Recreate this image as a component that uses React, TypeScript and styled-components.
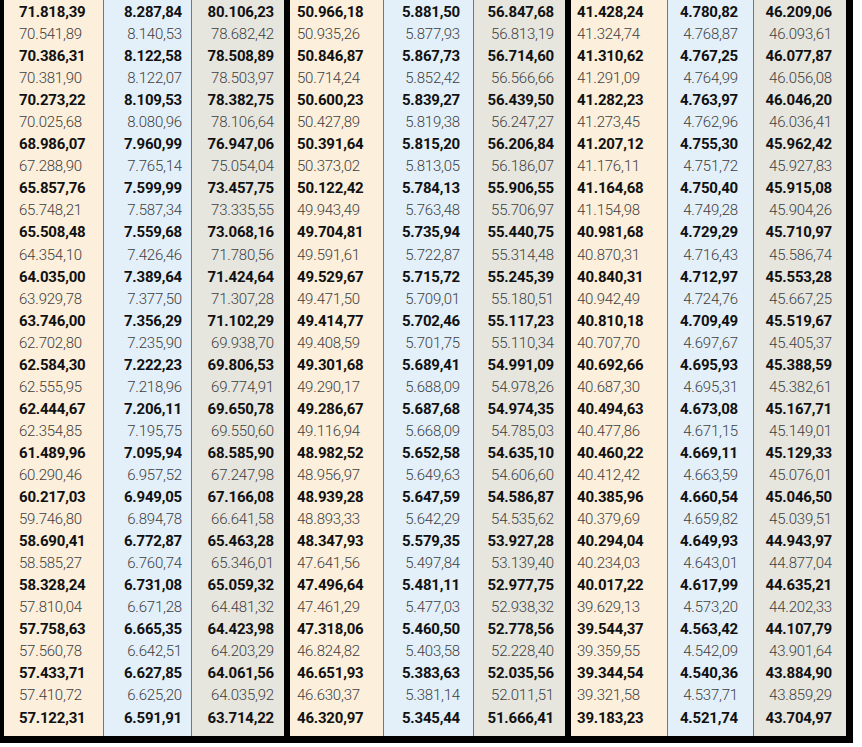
import React from "react";
import styled, { createGlobalStyle } from "styled-components";

const GlobalStyle = createGlobalStyle`
  html, body {
    margin: 0;
    padding: 0;
    background: #ffffff;
  }
`;

type Align = "left" | "right";

interface IColumn {
  width: number;
  bg: string;
  align: Align;
  pad: number;
  sep: boolean;
}

// 한 그룹에 세 컬럼 (연한 주황 / 파랑 / 회색)
const PEACH = "#fcefdb";
const BLUE = "#e3f0fa";
const GREY = "#e6e6df";

const groups: IColumn[][] = [
  [
    { width: 99, bg: PEACH, align: "left", pad: 15, sep: false },
    { width: 88, bg: BLUE, align: "right", pad: 9, sep: true },
    { width: 93, bg: GREY, align: "right", pad: 10, sep: true },
  ],
  [
    { width: 93, bg: PEACH, align: "left", pad: 7, sep: false },
    { width: 90, bg: BLUE, align: "right", pad: 13, sep: true },
    { width: 92, bg: GREY, align: "right", pad: 11, sep: true },
  ],
  [
    { width: 96, bg: PEACH, align: "left", pad: 6, sep: false },
    { width: 86, bg: BLUE, align: "right", pad: 15, sep: true },
    { width: 93, bg: GREY, align: "right", pad: 14, sep: true },
  ],
];

const rows: string[][] = [
  ["71.818,39", "8.287,84", "80.106,23", "50.966,18", "5.881,50", "56.847,68", "41.428,24", "4.780,82", "46.209,06"],
  ["70.541,89", "8.140,53", "78.682,42", "50.935,26", "5.877,93", "56.813,19", "41.324,74", "4.768,87", "46.093,61"],
  ["70.386,31", "8.122,58", "78.508,89", "50.846,87", "5.867,73", "56.714,60", "41.310,62", "4.767,25", "46.077,87"],
  ["70.381,90", "8.122,07", "78.503,97", "50.714,24", "5.852,42", "56.566,66", "41.291,09", "4.764,99", "46.056,08"],
  ["70.273,22", "8.109,53", "78.382,75", "50.600,23", "5.839,27", "56.439,50", "41.282,23", "4.763,97", "46.046,20"],
  ["70.025,68", "8.080,96", "78.106,64", "50.427,89", "5.819,38", "56.247,27", "41.273,45", "4.762,96", "46.036,41"],
  ["68.986,07", "7.960,99", "76.947,06", "50.391,64", "5.815,20", "56.206,84", "41.207,12", "4.755,30", "45.962,42"],
  ["67.288,90", "7.765,14", "75.054,04", "50.373,02", "5.813,05", "56.186,07", "41.176,11", "4.751,72", "45.927,83"],
  ["65.857,76", "7.599,99", "73.457,75", "50.122,42", "5.784,13", "55.906,55", "41.164,68", "4.750,40", "45.915,08"],
  ["65.748,21", "7.587,34", "73.335,55", "49.943,49", "5.763,48", "55.706,97", "41.154,98", "4.749,28", "45.904,26"],
  ["65.508,48", "7.559,68", "73.068,16", "49.704,81", "5.735,94", "55.440,75", "40.981,68", "4.729,29", "45.710,97"],
  ["64.354,10", "7.426,46", "71.780,56", "49.591,61", "5.722,87", "55.314,48", "40.870,31", "4.716,43", "45.586,74"],
  ["64.035,00", "7.389,64", "71.424,64", "49.529,67", "5.715,72", "55.245,39", "40.840,31", "4.712,97", "45.553,28"],
  ["63.929,78", "7.377,50", "71.307,28", "49.471,50", "5.709,01", "55.180,51", "40.942,49", "4.724,76", "45.667,25"],
  ["63.746,00", "7.356,29", "71.102,29", "49.414,77", "5.702,46", "55.117,23", "40.810,18", "4.709,49", "45.519,67"],
  ["62.702,80", "7.235,90", "69.938,70", "49.408,59", "5.701,75", "55.110,34", "40.707,70", "4.697,67", "45.405,37"],
  ["62.584,30", "7.222,23", "69.806,53", "49.301,68", "5.689,41", "54.991,09", "40.692,66", "4.695,93", "45.388,59"],
  ["62.555,95", "7.218,96", "69.774,91", "49.290,17", "5.688,09", "54.978,26", "40.687,30", "4.695,31", "45.382,61"],
  ["62.444,67", "7.206,11", "69.650,78", "49.286,67", "5.687,68", "54.974,35", "40.494,63", "4.673,08", "45.167,71"],
  ["62.354,85", "7.195,75", "69.550,60", "49.116,94", "5.668,09", "54.785,03", "40.477,86", "4.671,15", "45.149,01"],
  ["61.489,96", "7.095,94", "68.585,90", "48.982,52", "5.652,58", "54.635,10", "40.460,22", "4.669,11", "45.129,33"],
  ["60.290,46", "6.957,52", "67.247,98", "48.956,97", "5.649,63", "54.606,60", "40.412,42", "4.663,59", "45.076,01"],
  ["60.217,03", "6.949,05", "67.166,08", "48.939,28", "5.647,59", "54.586,87", "40.385,96", "4.660,54", "45.046,50"],
  ["59.746,80", "6.894,78", "66.641,58", "48.893,33", "5.642,29", "54.535,62", "40.379,69", "4.659,82", "45.039,51"],
  ["58.690,41", "6.772,87", "65.463,28", "48.347,93", "5.579,35", "53.927,28", "40.294,04", "4.649,93", "44.943,97"],
  ["58.585,27", "6.760,74", "65.346,01", "47.641,56", "5.497,84", "53.139,40", "40.234,03", "4.643,01", "44.877,04"],
  ["58.328,24", "6.731,08", "65.059,32", "47.496,64", "5.481,11", "52.977,75", "40.017,22", "4.617,99", "44.635,21"],
  ["57.810,04", "6.671,28", "64.481,32", "47.461,29", "5.477,03", "52.938,32", "39.629,13", "4.573,20", "44.202,33"],
  ["57.758,63", "6.665,35", "64.423,98", "47.318,06", "5.460,50", "52.778,56", "39.544,37", "4.563,42", "44.107,79"],
  ["57.560,78", "6.642,51", "64.203,29", "46.824,82", "5.403,58", "52.228,40", "39.359,55", "4.542,09", "43.901,64"],
  ["57.433,71", "6.627,85", "64.061,56", "46.651,93", "5.383,63", "52.035,56", "39.344,54", "4.540,36", "43.884,90"],
  ["57.410,72", "6.625,20", "64.035,92", "46.630,37", "5.381,14", "52.011,51", "39.321,58", "4.537,71", "43.859,29"],
  ["57.122,31", "6.591,91", "63.714,22", "46.320,97", "5.345,44", "51.666,41", "39.183,23", "4.521,74", "43.704,97"],
];

const Table = styled.div`
  display: inline-flex;
  gap: 6px;
  background-color: #000;
  padding: 0 7px 7px 4px;
  font-family: "Roboto", "Liberation Sans", sans-serif;
  font-size: 15px;
  letter-spacing: -0.2px;
`;

const Group = styled.div`
  display: flex;
`;

const Col = styled.div<{ $width: number; $bg: string; $align: Align; $pad: number; $sep: boolean }>`
  box-sizing: border-box;
  width: ${(p) => p.$width}px;
  background-color: ${(p) => p.$bg};
  text-align: ${(p) => p.$align};
  padding: 1px 0 7px;
  ${(p) => (p.$align === "left" ? `padding-left: ${p.$pad}px;` : `padding-right: ${p.$pad}px;`)}
  border-left: ${(p) => (p.$sep ? "1px solid #767676" : "none")};
`;

const Cell = styled.div<{ $bold: boolean }>`
  height: 22.06px;
  line-height: 22.06px;
  white-space: nowrap;
  font-weight: ${(p) => (p.$bold ? 700 : 300)};
  color: ${(p) => (p.$bold ? "#111111" : "#3e3e3e")};
`;

function App() {
  return (
    <>
      <GlobalStyle />
      <Table>
        {groups.map((cols, g) => (
          <Group key={g}>
            {cols.map((col, c) => {
              const idx = g * 3 + c;
              return (
                <Col
                  key={c}
                  $width={col.width}
                  $bg={col.bg}
                  $align={col.align}
                  $pad={col.pad}
                  $sep={col.sep}
                >
                  {rows.map((row, r) => (
                    <Cell key={r} $bold={r % 2 === 0}>
                      {row[idx]}
                    </Cell>
                  ))}
                </Col>
              );
            })}
          </Group>
        ))}
      </Table>
    </>
  );
}

export default App;
